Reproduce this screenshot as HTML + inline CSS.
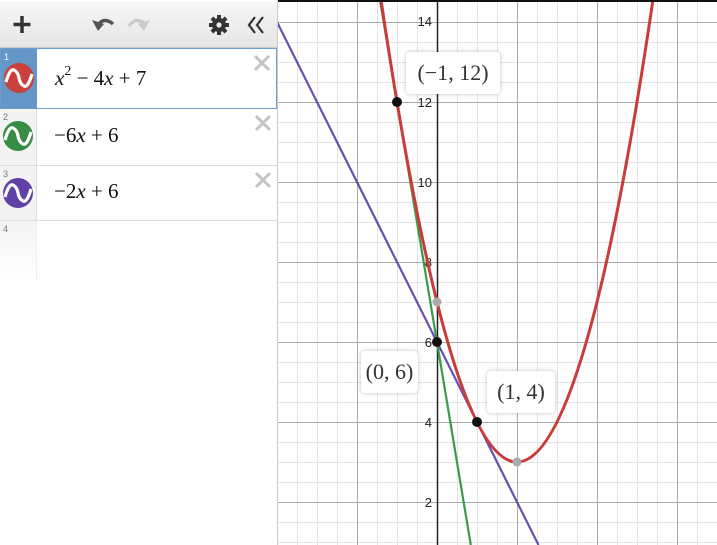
<!DOCTYPE html><html><head><style>
body{margin:0;width:717px;height:545px;overflow:hidden;background:#fff;font-family:"Liberation Sans",sans-serif;position:relative}
svg.g{position:absolute;left:0;top:0}
.panel{position:absolute;left:0;top:0;width:277px;height:545px;border-right:1px solid #ccc;background:#fff}
.top{position:absolute;left:0;top:2px;width:277px;height:45px;background:linear-gradient(#f6f6f6,#e6e6e6);border-bottom:1px solid #ccc}
.row{position:absolute;left:0;width:277px;border-bottom:1px solid #ddd;background:#fff}
.num{position:absolute;left:0;top:0;width:36px;height:100%;background:#f3f3f3;border-right:1px solid #ddd;font-size:9px;color:#777}
.num span{position:absolute;left:3px;top:3px}
.ic{position:absolute;left:3px;width:30px;height:30px}
.ex{position:absolute;left:54px;font-family:"Liberation Serif",serif;font-size:21px;color:#111}
.x{position:absolute;right:5px;top:5px;line-height:1}
.lbl{position:absolute;background:#fff;border-radius:4px;box-shadow:0 0 4px rgba(0,0,0,.25);font-family:"Liberation Serif",serif;font-size:22px;color:#333;text-align:center}
</style></head><body>
<svg class="g" width="717" height="545">
<g stroke="#e4e4e4" stroke-width="1">
<path d="M297.5 0V545M317.5 0V545M337.5 0V545M377.5 0V545M397.5 0V545M417.5 0V545M457.5 0V545M477.5 0V545M497.5 0V545M537.5 0V545M557.5 0V545M577.5 0V545M617.5 0V545M637.5 0V545M657.5 0V545M697.5 0V545"/>
<path d="M278 42.5H717M278 62.5H717M278 82.5H717M278 122.5H717M278 142.5H717M278 162.5H717M278 202.5H717M278 222.5H717M278 242.5H717M278 282.5H717M278 302.5H717M278 322.5H717M278 362.5H717M278 382.5H717M278 402.5H717M278 442.5H717M278 462.5H717M278 482.5H717M278 522.5H717M278 542.5H717"/>
</g>
<g stroke="#aaa" stroke-width="1">
<path d="M357.5 0V545M517.5 0V545M597.5 0V545M677.5 0V545M278 22.5H717M278 102.5H717M278 182.5H717M278 262.5H717M278 342.5H717M278 422.5H717M278 502.5H717"/>
</g>
<path d="M437.5 0V545" stroke="#222" stroke-width="1.5"/>
<g font-size="13" fill="#222" text-anchor="end" font-family="Liberation Sans">
<text x="432" y="26">14</text><text x="432" y="107">12</text><text x="432" y="187">10</text><text x="432" y="267">8</text><text x="432" y="347">6</text><text x="432" y="427">4</text><text x="432" y="507">2</text>
</g>
<path d="M266 0L538.5 545" stroke="#6a4fb0" stroke-width="2.2" fill="none"/>
<path d="M380.3 2L470.8 545" stroke="#3a9a4a" stroke-width="2.2" fill="none"/>
<path d="M377 -28Q517 952 657 -28" stroke="#c93c3a" stroke-width="3" fill="none"/>
<circle cx="437" cy="302" r="4.5" fill="#aaa"/><circle cx="517" cy="462" r="4.5" fill="#aaa"/>
<circle cx="397" cy="102" r="5" fill="#111"/><circle cx="437" cy="342" r="5" fill="#111"/><circle cx="477" cy="422" r="5" fill="#111"/>
<rect x="0" y="0" width="717" height="2" fill="#111"/>
</svg>
<div class="lbl" style="left:406px;top:52px;width:94px;height:42px;line-height:42px">(−1, 12)</div>
<div class="lbl" style="left:361px;top:351px;width:57px;height:42px;line-height:42px">(0, 6)</div>
<div class="lbl" style="left:487px;top:371px;width:68px;height:42px;line-height:42px">(1, 4)</div>
<div class="panel">
<div class="top">
<svg width="277" height="45"><path d="M22 14V31M13.5 22.5H30.5" stroke="#333" stroke-width="3.5"/>
<path d="M97 24Q104 14 113 22" stroke="#555" stroke-width="3.5" fill="none"/><path d="M92 18L98 29L104 22Z" fill="#555"/>
<path d="M145 22Q136 14 129 24" stroke="#ccc" stroke-width="3.5" fill="none"/><path d="M150 18L144 29L138 22Z" fill="#ccc"/>
<g fill="#333" transform="translate(219 23)"><rect x="-2" y="-10" width="4" height="20"/><rect x="-2" y="-10" width="4" height="20" transform="rotate(45)"/><rect x="-2" y="-10" width="4" height="20" transform="rotate(90)"/><rect x="-2" y="-10" width="4" height="20" transform="rotate(135)"/><circle r="7"/><circle r="2.6" fill="#eee"/></g>
<path d="M255 15L249 23L255 31M263 15L257 23L263 31" stroke="#333" stroke-width="2.2" fill="none"/></svg>
</div>
<div class="row" style="top:48px;height:59px;border:1px solid #6d9dcf;width:275px">
<div class="num" style="background:#6496c8;border:none;color:#fff"><span>1</span></div>
<svg class="ic" style="top:14px" viewBox="0 0 30 30"><circle cx="15" cy="15" r="15" fill="#c9413c"/><path d="M2 19Q6 5 10 7T15 15T20 23T28 11" stroke="#fff" stroke-width="3.2" fill="none"/></svg>
<div class="ex" style="top:17px"><i>x</i><sup style="font-size:14px;position:relative;top:-2px">2</sup> − 4<i>x</i> + 7</div>
<svg class="x" width="18" height="18"><path d="M2 2L16 16M16 2L2 16" stroke="#c4c4c4" stroke-width="3"/></svg></div>
<div class="row" style="top:109px;height:56px">
<div class="num"><span>2</span></div>
<svg class="ic" style="top:12px" viewBox="0 0 30 30"><circle cx="15" cy="15" r="15" fill="#388c46"/><path d="M2 19Q6 5 10 7T15 15T20 23T28 11" stroke="#fff" stroke-width="3.2" fill="none"/></svg>
<div class="ex" style="top:14px">−6<i>x</i> + 6</div>
<svg class="x" width="18" height="18"><path d="M2 2L16 16M16 2L2 16" stroke="#c4c4c4" stroke-width="3"/></svg></div>
<div class="row" style="top:166px;height:54px">
<div class="num"><span>3</span></div>
<svg class="ic" style="top:12px" viewBox="0 0 30 30"><circle cx="15" cy="15" r="15" fill="#6042a6"/><path d="M2 19Q6 5 10 7T15 15T20 23T28 11" stroke="#fff" stroke-width="3.2" fill="none"/></svg>
<div class="ex" style="top:13px">−2<i>x</i> + 6</div>
<svg class="x" width="18" height="18"><path d="M2 2L16 16M16 2L2 16" stroke="#c4c4c4" stroke-width="3"/></svg></div>
<div class="row" style="top:221px;height:60px;border:none;background:linear-gradient(#fff,#fff 60%,rgba(255,255,255,0))">
<div class="num" style="background:linear-gradient(#f3f3f3,#fff);border-right-color:#eee"><span>4</span></div></div>
</div>
</body></html>
